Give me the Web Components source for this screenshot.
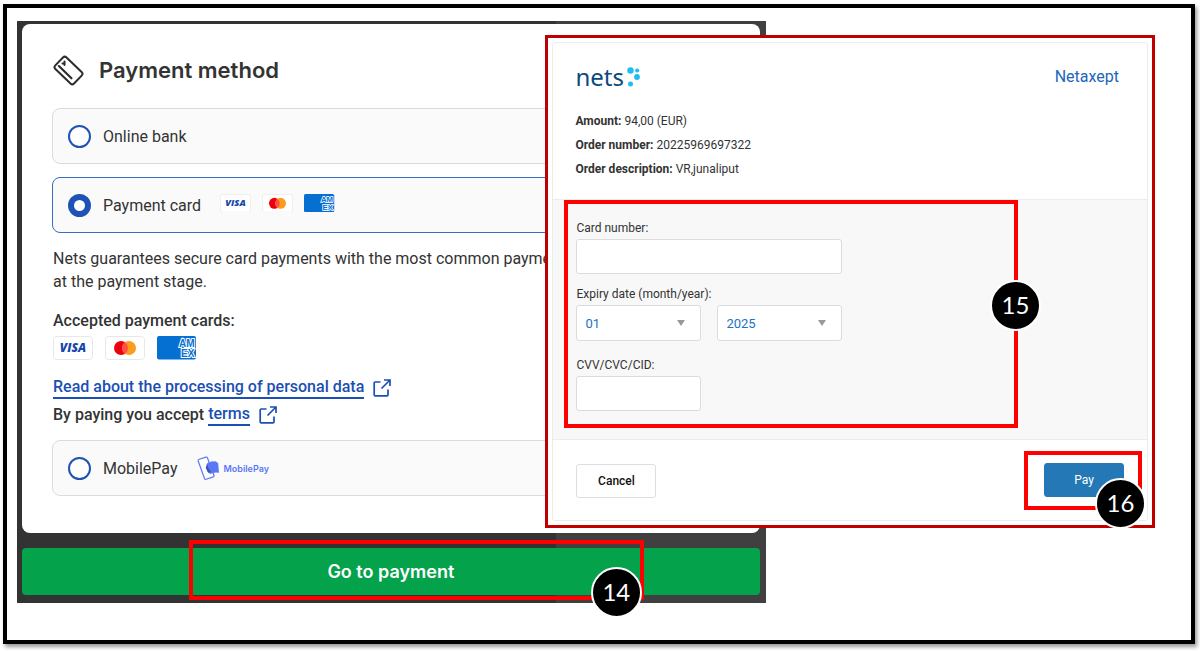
<!DOCTYPE html>
<html lang="en">
<head>
<meta charset="utf-8">
<title>Payment method</title>
<style>
  body { margin: 0; background: #fff; font-family: Roboto, sans-serif; }
</style>
</head>
<body>
<guide-page></guide-page>
<script>
function define(name, html) {
  const template = document.createElement('template');
  template.innerHTML = html;
  customElements.define(name, class extends HTMLElement {
    constructor() {
      super();
      this.attachShadow({ mode: 'open' }).appendChild(template.content.cloneNode(true));
    }
  });
}

/* Numbered step marker */
define('step-badge', `
<style>
  :host { position: absolute; display: grid; place-items: center; width: 47px; height: 45px; padding-bottom: 2px;
    border: 2px solid #fff; border-radius: 50%; background: #000; color: #fff;
    font: 24px/1 Lato, sans-serif; }
</style><slot></slot>`);

/* Card scheme marks */
define('visa-logo', `
<style>:host { display: block; width: var(--logo-width, 40px); } svg { display: block; width: 100%; }</style>
<svg viewBox="0 0 40 24" role="img" aria-label="Visa">
  <rect x=".5" y=".5" width="39" height="23" rx="3" fill="#fff" stroke="#e8e8e8"/>
  <text x="20" y="16" text-anchor="middle" font-family="Open Sans, sans-serif" font-size="12" font-weight="800" font-style="italic" fill="#1546ad">VISA</text>
</svg>`);
define('mastercard-logo', `
<style>:host { display: block; width: var(--logo-width, 40px); } svg { display: block; width: 100%; }</style>
<svg viewBox="0 0 40 24" role="img" aria-label="Mastercard">
  <rect x=".5" y=".5" width="39" height="23" rx="3" fill="#fff" stroke="#e8e8e8"/>
  <circle cx="16" cy="12" r="7" fill="#eb0010"/><circle cx="24" cy="12" r="7" fill="#fb9d1c"/>
  <path d="M20 6.3a7 7 0 0 1 0 11.4a7 7 0 0 1 0-11.4z" fill="#ff5048"/>
</svg>`);
define('amex-logo', `
<style>:host { display: block; width: var(--logo-width, 40px); } svg { display: block; width: 100%; }</style>
<svg viewBox="0 0 40 24" role="img" aria-label="American Express">
  <rect x="0" y="0" width="39" height="23.500" rx="2" fill="#0670d2"/>
  <g font-family="Liberation Sans, sans-serif" font-size="10" font-weight="700" fill="#0670d2" stroke="#fff" stroke-width="2" paint-order="stroke">
    <text x="22" y="10.500">AM</text><text x="24" y="20.500">EX</text>
  </g>
</svg>`);

define('external-icon', `
<style>:host { display: inline-block; width: 18px; height: 18px; } svg { display: block; }</style>
<svg width="18" height="18" viewBox="0 0 18 18" fill="none" stroke="#1b4fb3" stroke-width="1.7" aria-hidden="true">
  <path d="M7.5 3H2.2a1 1 0 0 0-1 1v11.800a1 1 0 0 0 1 1H14a1 1 0 0 0 1-1V10.500M11 1h6v6M17 1L8.500 9.500"/>
</svg>`);

/* One selectable way of paying */
customElements.define('payment-option', class extends HTMLElement {
  constructor() {
    super();
    this.attachShadow({ mode: 'open' }).innerHTML = `
<style>
  :host { display: flex; align-items: center; height: 54px; padding: 0 15px; background: #fafafa;
    border: 1px solid #dcdcdc; border-radius: 8px; --logo-width: 31px; }
  :host([selected]) { border-color: #3a6cc4; }
  label { display: flex; align-items: center; gap: 12px; font-size: 16px; color: #333; }
  input { appearance: none; margin: 0; width: 23px; height: 23px; box-sizing: border-box;
    border: 2px solid #1f52b5; border-radius: 50%; background: #fff; }
  input:checked { border-width: 6px; }
  .marks { display: flex; align-items: center; gap: 11px; margin: 0 0 4px 19px; }
  :host([brand]) .marks { margin-bottom: 0; }
</style>
<label><input type="radio" name="method"><span></span></label><div class="marks"><slot></slot></div>`;
    this.shadowRoot.querySelector('span').textContent = this.getAttribute('label');
    this.shadowRoot.querySelector('input').checked = this.hasAttribute('selected');
  }
});

define('mobilepay-logo', `
<style>:host { display: flex; align-items: center; gap: 5px; color: #5a78f5; font: 600 9px Inter, sans-serif; } svg { display: block; }</style>
<svg width="22" height="24" viewBox="0 0 22 24" aria-hidden="true">
  <path d="M2.200 3.300L9 1.100q1-.3 1.400.6L17 19.500q.3 1-.6 1.400L9 23.300q-1 .3-1.400-.6L1.200 5q-.3-1.200 1-1.700z" fill="#fff" stroke="#5a78f5" stroke-width="1.200"/>
  <path d="M10 7.500q1.500-1.500 3-1.300q2-1.700 4-.7q1.700-.8 2.700.7q2 .3 1.600 2.500l.7 8q-5-1-9 1.300l-3-3z" fill="#5a78f5"/>
  <path d="M10 7.500L8.700 12l2.600 4.800l2.700-.8q-3.500-4-4-8.500z" fill="#3854b8"/>
</svg><span>MobilePay</span>`);

define('payment-panel', `
<style>
  :host { display: block; padding: 3px 6px 8px 5px; background: linear-gradient(to right, #333 72%, #404040 72%); color: #333; }
  .card { padding: 30px 22px 37px 30px; background: #fff; border-radius: 8px; font-size: 16px; line-height: 23px; }
  header { display: flex; align-items: center; gap: 14px; height: 32px; margin-bottom: 22px; }
  h1 { margin: 0; font: 600 22px/32px Inter, sans-serif; }
  header svg { display: block; }
  payment-option[selected] { margin-top: 13px; }
  .details { padding: 14px 0 12px 1px; }
  p { margin: 0; }
  h2 { margin: 16px 0 4px; font-size: 16px; font-weight: 500; }
  .logos { display: flex; gap: 12px; margin-bottom: 14px; }
  .line { display: flex; align-items: center; height: 27px; font-size: 16px; font-weight: 500; }
  a { color: #1b4fb3; text-decoration: none; line-height: 20px; border-bottom: 2px solid #1b4fb3; }
  .line external-icon { margin-left: 9px; }
  .line a.terms { margin-left: 4px; }
  .bar { position: relative; margin-top: 15px; }
  .bar button { display: block; width: 100%; height: 47px; padding: 0; border: 0; border-radius: 4px;
    background: #04a24b; color: #fff; font: 600 18px/1 Inter, sans-serif; }
  .mark { position: absolute; left: 22.7%; right: 15.7%; top: -8px; bottom: -5px; border: 4px solid #f00; pointer-events: none; }
  step-badge { right: -2px; bottom: -22px; }
</style>
<section class="card">
  <header>
    <svg width="33" height="32" viewBox="0 0 33 32" fill="none" stroke="#2d2d2d" stroke-width="2" stroke-linecap="round" aria-hidden="true">
      <g transform="translate(16.500 16.500) rotate(44)">
        <rect x="-13" y="-8" width="26" height="16" rx="2.500"/>
        <path d="M-10 3.500H7.500" stroke-width="2.200"/>
      </g>
      <path d="M12.500 7.500v3.500M12.500 9.300l-2 .2" stroke-width="2"/>
    </svg>
    <h1>Payment method</h1>
  </header>
  <payment-option label="Online bank"></payment-option>
  <payment-option label="Payment card" selected>
    <visa-logo></visa-logo><mastercard-logo></mastercard-logo><amex-logo></amex-logo>
  </payment-option>
  <div class="details">
    <p>Nets guarantees secure card payments with the most common payment<br>at the payment stage.</p>
    <h2>Accepted payment cards:</h2>
    <div class="logos"><visa-logo></visa-logo><mastercard-logo></mastercard-logo><amex-logo></amex-logo></div>
    <div class="line"><a href="#data">Read about the processing of personal data</a><external-icon></external-icon></div>
    <div class="line"><span>By paying you accept</span><a class="terms" href="#terms">terms</a><external-icon></external-icon></div>
  </div>
  <payment-option label="MobilePay" brand><mobilepay-logo></mobilepay-logo></payment-option>
</section>
<div class="bar"><button type="button">Go to payment</button><div class="mark"><step-badge>14</step-badge></div></div>`);

define('nets-logo', `
<style>:host { display: flex; align-items: center; height: 24px; gap: 3px; color: #0b4a80; font: 24px/24px "Noto Sans", sans-serif; } svg { display: block; }</style>
<span>nets</span>
<svg width="14" height="20" viewBox="0 0 14 20" fill="#1fbdf0" aria-hidden="true">
  <circle cx="3.500" cy="3.500" r="3.200"/><circle cx="10.200" cy="3.500" r="2.100"/><circle cx="10" cy="10" r="2.900"/><circle cx="3.500" cy="17" r="2.500"/>
</svg>`);

define('card-dialog', `
<style>
  :host { display: block; border: 3px solid #c00000; background: #fff; padding: 4px;
    font: 12px/24px Roboto, sans-serif; color: #333; }
  .inner { border: 1px solid #ececec; border-radius: 3px; }
  header { padding: 22px 23px 18px 22px; }
  .brand { display: flex; justify-content: space-between; align-items: center; margin-bottom: 20px; }
  .brand a { color: #1d66b8; text-decoration: none; font: 16px/24px Roboto, sans-serif; margin-right: 5px; }
  dl { margin: 0; }
  dl div { display: flex; gap: 3px; }
  dt { font-weight: 700; } dd { margin: 0; }
  .fields { background: #f8f8f8; border: solid #ececec; border-width: 1px 0; padding: 0 129px 11px 11px; }
  .mark { position: relative; border: 4px solid #f00; }
  form { display: grid; grid-template-columns: 125px 125px; column-gap: 16px; padding: 13px 8px 13px; }
  .wide { grid-column: 1 / -1; }
  label { line-height: 22px; }
  input, select { box-sizing: border-box; width: 100%; height: 35px; margin: 0; border: 1px solid #dcdcdc; border-radius: 3px; background: #fff; }
  input.wide { margin-bottom: 9px; }
  .select { position: relative; margin-bottom: 13px; }
  select { display: block; height: 36px; appearance: none; padding: 0 8px; color: #2272c3; font: 13px Roboto, sans-serif; }
  .select::after { content: ""; position: absolute; right: 16px; top: 15px; border: solid transparent; border-width: 6px 4px 0; border-top-color: #999; pointer-events: none; }
  .fields step-badge { right: -27px; top: 76px; }
  footer { display: flex; justify-content: space-between; align-items: center; padding: 11px 5px 10px 23px; }
  button { width: 80px; height: 34px; padding: 0; border: 1px solid #dcdfe0; border-radius: 3px; background: #fff; color: #111; font: 500 12px Roboto, sans-serif; }
  .pay { position: relative; border: 4px solid #f00; padding: 8px 14px 9px 16px; }
  .pay button { display: block; background: #2478b5; border-color: #2478b5; color: #fff; font-weight: 400; }
  .pay step-badge { right: -8px; bottom: -23px; }
</style>
<div class="inner">
  <header>
    <div class="brand"><nets-logo></nets-logo><a href="#netaxept">Netaxept</a></div>
    <dl>
      <div><dt>Amount:</dt><dd>94,00 (EUR)</dd></div>
      <div><dt>Order number:</dt><dd>20225969697322</dd></div>
      <div><dt>Order description:</dt><dd>VR,junaliput</dd></div>
    </dl>
  </header>
  <div class="fields"><div class="mark">
    <form>
      <label class="wide" for="number">Card number:</label>
      <input class="wide" id="number" type="text" inputmode="numeric">
      <label class="wide" for="month">Expiry date (month/year):</label>
      <div class="select"><select id="month"><option>01</option></select></div>
      <div class="select"><select id="year" aria-label="Expiry year"><option>2025</option></select></div>
      <label class="wide" for="cvv">CVV/CVC/CID:</label>
      <input id="cvv" type="text" inputmode="numeric">
    </form>
    <step-badge>15</step-badge>
  </div></div>
  <footer>
    <button type="button">Cancel</button>
    <div class="pay"><button type="button">Pay</button><step-badge>16</step-badge></div>
  </footer>
</div>`);

define('guide-page', `
<style>
  :host { display: block; padding: 4px 5px 7px 3px; }
  main { display: grid; grid-template-columns: 528fr 220fr 389fr; align-items: start;
    padding: 13px 36px 37px 10px; border: 4px solid #000; background: #fff; box-shadow: 2px 3px 4px #999; }
  payment-panel { grid-area: 1 / 1 / 2 / 3; }
  card-dialog { grid-area: 1 / 2 / 2 / 4; margin-top: 14px; z-index: 1; }
</style>
<main><payment-panel></payment-panel><card-dialog></card-dialog></main>`);
</script>
</body>
</html>
